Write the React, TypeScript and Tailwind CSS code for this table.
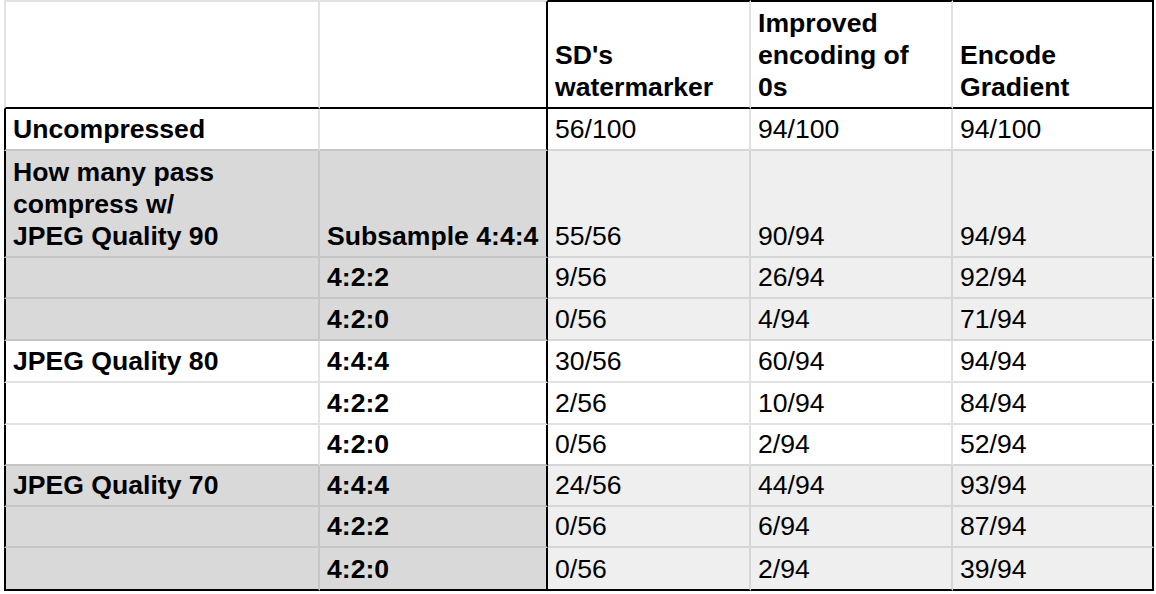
const rows: { gray: boolean; cells: string[][] }[] = [
  { gray: false, cells: [[], [], ["SD's", "watermarker"], ["Improved", "encoding of", "0s"], ["Encode", "Gradient"]] },
  { gray: false, cells: [["Uncompressed"], [], ["56/100"], ["94/100"], ["94/100"]] },
  { gray: true, cells: [["How many pass", "compress w/", "JPEG Quality 90"], ["Subsample 4:4:4"], ["55/56"], ["90/94"], ["94/94"]] },
  { gray: true, cells: [[], ["4:2:2"], ["9/56"], ["26/94"], ["92/94"]] },
  { gray: true, cells: [[], ["4:2:0"], ["0/56"], ["4/94"], ["71/94"]] },
  { gray: false, cells: [["JPEG Quality 80"], ["4:4:4"], ["30/56"], ["60/94"], ["94/94"]] },
  { gray: false, cells: [[], ["4:2:2"], ["2/56"], ["10/94"], ["84/94"]] },
  { gray: false, cells: [[], ["4:2:0"], ["0/56"], ["2/94"], ["52/94"]] },
  { gray: true, cells: [["JPEG Quality 70"], ["4:4:4"], ["24/56"], ["44/94"], ["93/94"]] },
  { gray: true, cells: [[], ["4:2:2"], ["0/56"], ["6/94"], ["87/94"]] },
  { gray: true, cells: [[], ["4:2:0"], ["0/56"], ["2/94"], ["39/94"]] },
]

function cellClass(r: number, c: number) {
  const last = rows.length - 1
  const gray = rows[r].gray
  const nextGray = r < last && rows[r + 1].gray
  const cls = ["flex items-end pl-[7px] pr-[4px] pb-[4px] leading-[32px] whitespace-nowrap border-r-2 border-b-2"]

  // fill
  if (gray) cls.push(c < 2 ? "bg-[#d9d9d9]" : "bg-[#efefef]")
  else cls.push("bg-white")

  if (r === 0 || c < 2) cls.push("font-bold")

  // right edge
  if (c === 1 || c === 4) cls.push("border-r-black")
  else if (gray) cls.push(c < 2 ? "border-r-[#c6c6c6]" : "border-r-[#d6d6d6]")
  else cls.push("border-r-[#e2e2e2]")

  // bottom edge
  if (r === 0 || r === last) cls.push("border-b-black")
  else if (gray || nextGray) cls.push(c < 2 ? "border-b-[#c6c6c6]" : "border-b-[#d6d6d6]")
  else cls.push("border-b-[#e2e2e2]")

  if (r === 0) cls.push(c >= 2 ? "border-t-2 border-t-black" : "border-t-2 border-t-[#e2e2e2]")
  if (c === 0) cls.push(r === 0 ? "border-l-2 border-l-[#e2e2e2]" : "border-l-2 border-l-black")

  return cls.join(" ")
}

export default function App() {
  return (
    <div className="min-h-screen bg-white pl-[4px] text-black text-[26.6px]" style={{ fontFamily: '"Liberation Sans", Arial, sans-serif' }}>
      <div className="grid w-[1150px] grid-cols-[316px_228px_203px_202px_201px] grid-rows-[109px_42px_107px_41px_42px_42px_42px_41px_41px_41px_43px]">
        {rows.map((row, r) =>
          row.cells.map((lines, c) => (
            <div key={r + "-" + c} className={cellClass(r, c)}>
              <div>
                {lines.map((l, i) => (
                  <div key={i}>{l}</div>
                ))}
              </div>
            </div>
          ))
        )}
      </div>
    </div>
  )
}
